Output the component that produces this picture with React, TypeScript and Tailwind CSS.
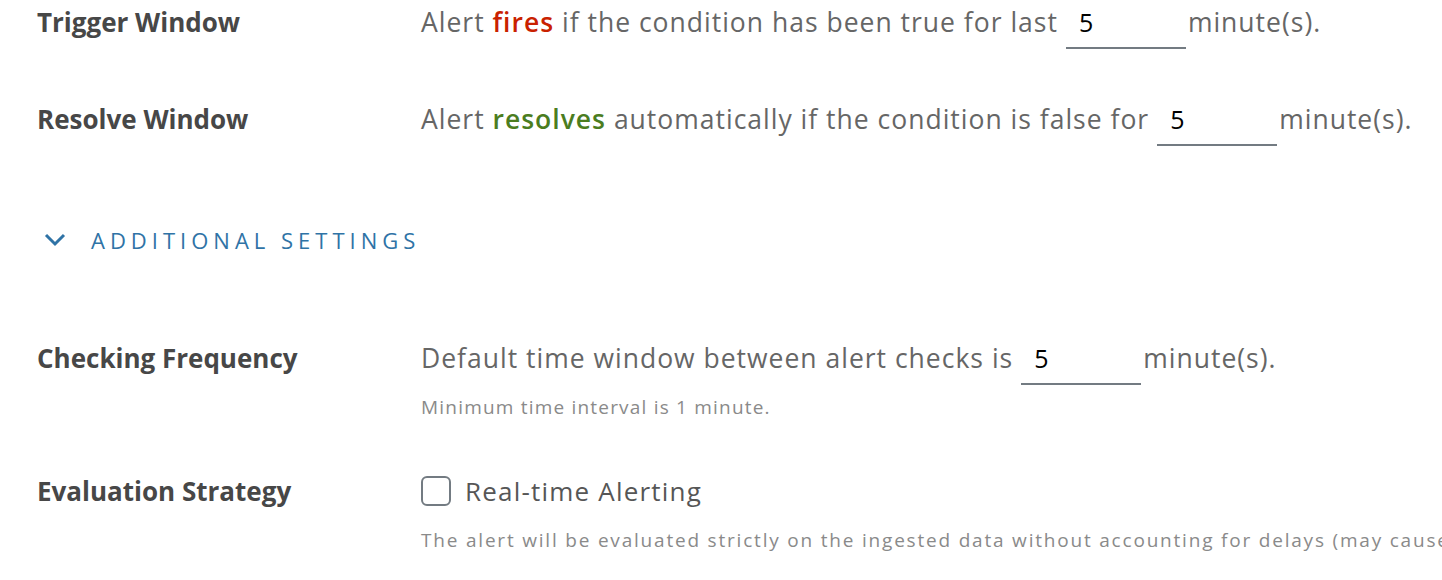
import React from 'react';

const Label = ({ children }: { children: React.ReactNode }) => (
  <div className="w-[384px] shrink-0 text-[26px] leading-[40px] font-bold text-[#474747]">{children}</div>
);

const MinuteInput = () => (
  <span className="mb-[-10px] ml-[8px] mr-[2px] inline-block w-[120px] border-b-2 border-[#737b82] pb-[13px] pl-[13px] text-[25px] leading-[24px] tracking-normal text-black">
    5
  </span>
);

const App = () => {
  return (
    <div
      className="h-[580px] w-[1442px] overflow-hidden bg-white pl-[37px] text-[#666666]"
      style={{ fontFamily: '"Open Sans", "Liberation Sans", sans-serif' }}
    >
      <div className="flex items-start pt-[2px] whitespace-nowrap">
        <Label>Trigger Window</Label>
        <div className="text-[26.5px] leading-[40px] tracking-[1px]">
          Alert <span className="font-semibold text-[#c92100]">fires</span> if the condition has been true for last
          <MinuteInput />
          minute(s).
        </div>
      </div>

      <div className="mt-[57px] flex items-start whitespace-nowrap">
        <Label>Resolve Window</Label>
        <div className="text-[26.5px] leading-[40px] tracking-[1px]">
          Alert <span className="font-semibold text-[#4b7d1f]">resolves</span> automatically if the condition is false for
          <MinuteInput />
          minute(s).
        </div>
      </div>

      <button className="mt-[89px] flex h-[24px] items-center gap-[25px] text-[#2f73a6]">
        <svg width="22" height="14" viewBox="0 0 22 14" className="ml-[7px]">
          <path d="M2 2 L11 11 L20 2" fill="none" stroke="currentColor" strokeWidth="3" />
        </svg>
        <span className="text-[22px] leading-[24px] font-medium uppercase tracking-[5px]">Additional Settings</span>
      </button>

      <div className="mt-[86px] flex items-start whitespace-nowrap">
        <Label>Checking Frequency</Label>
        <div>
          <div className="text-[26.5px] leading-[40px] tracking-[1px]">
            Default time window between alert checks is
            <MinuteInput />
            minute(s).
          </div>
          <div className="mt-[17px] text-[19px] leading-[24px] tracking-[1.2px] text-[#8a8a8a]">
            Minimum time interval is 1 minute.
          </div>
        </div>
      </div>

      <div className="mt-[52px] flex items-start whitespace-nowrap">
        <Label>Evaluation Strategy</Label>
        <div>
          <label className="flex h-[40px] items-center gap-[14px] text-[26px] leading-[40px] tracking-[1.2px] text-[#565656]">
            <span className="h-[30px] w-[30px] shrink-0 rounded-[6px] border-2 border-[#737b82]" />
            Real-time Alerting
          </label>
          <div className="mt-[17px] text-[19px] leading-[24px] tracking-[1.8px] text-[#8a8a8a]">
            The alert will be evaluated strictly on the ingested data without accounting for delays (may cause false alerts)
          </div>
        </div>
      </div>
    </div>
  );
};

export default App;
